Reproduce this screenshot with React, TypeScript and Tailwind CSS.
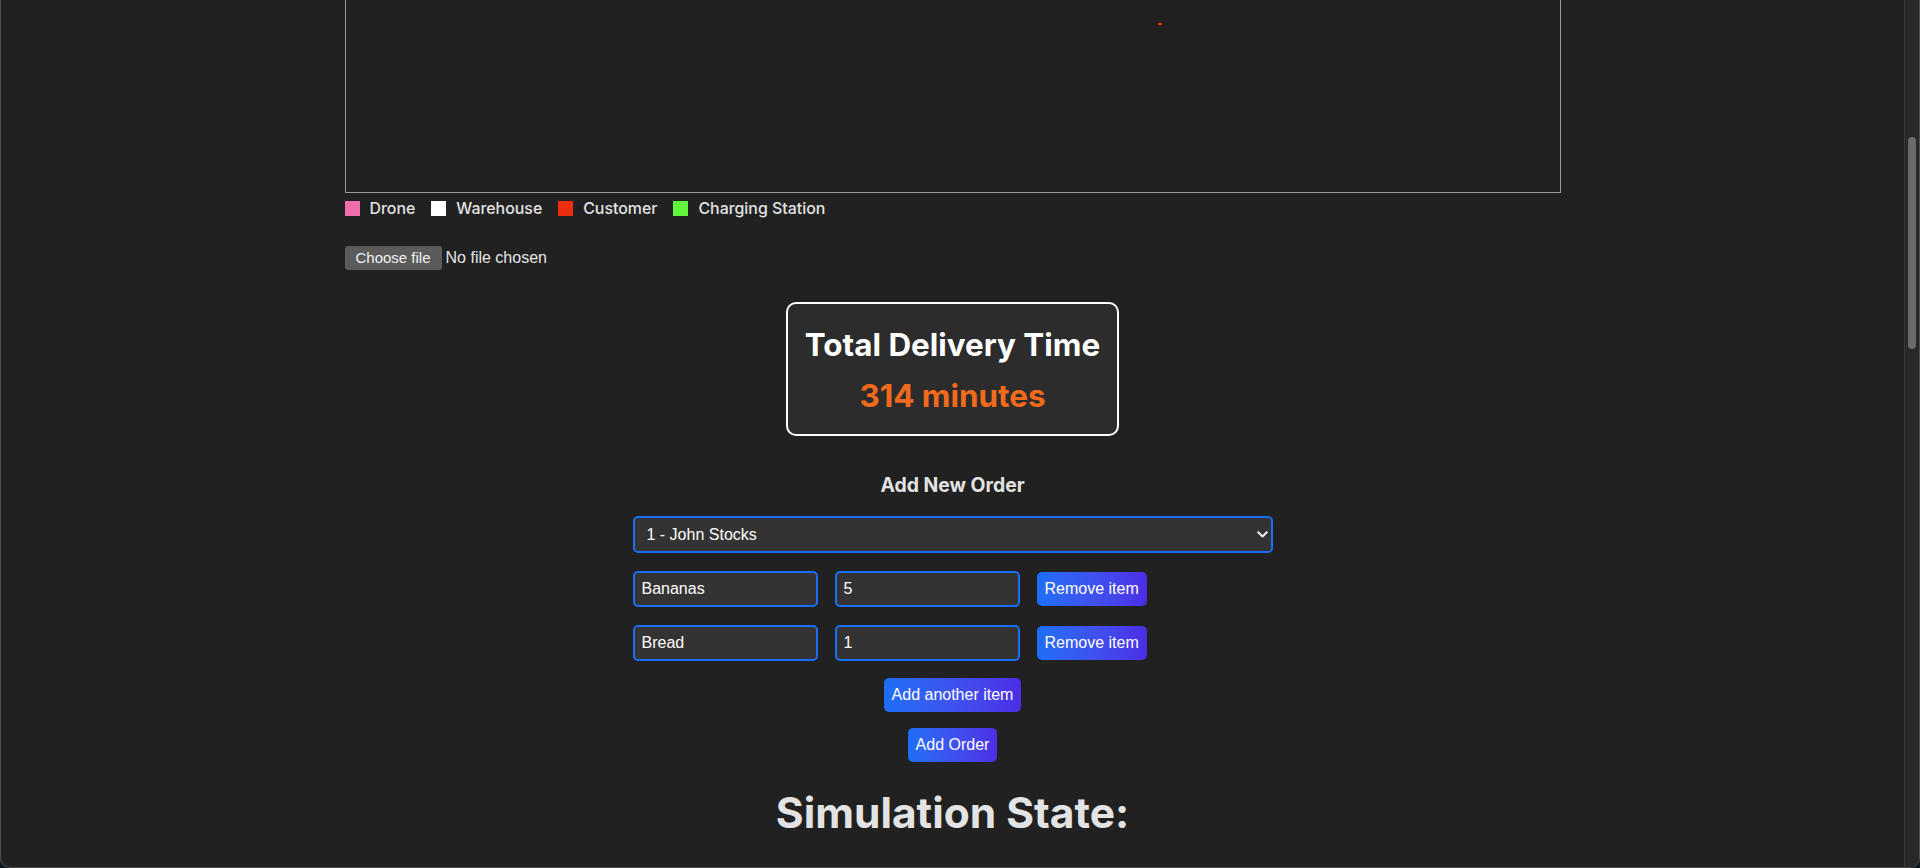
import React from "react";

function LegendItem({ color, label }: { color: string; label: string }) {
  return (
    <div className="mr-4 flex items-center">
      <span className={`mr-[10px] block h-[15px] w-[15px] ${color}`} />
      <span>{label}</span>
    </div>
  );
}

function ItemRow({ name, qty }: { name: string; qty: string }) {
  return (
    <div className="mt-[18px] flex items-center gap-[17px]">
      <input
        readOnly
        value={name}
        className="h-[36px] w-[185px] rounded-[5px] border-2 border-[#1a6ff5] bg-[#333333] pl-[7px] font-['Liberation_Sans',Arial,sans-serif] text-[16px] text-white outline-none"
      />
      <input
        readOnly
        value={qty}
        className="h-[36px] w-[185px] rounded-[5px] border-2 border-[#1a6ff5] bg-[#333333] pl-[7px] font-['Liberation_Sans',Arial,sans-serif] text-[16px] text-white outline-none"
      />
      <button className="h-[34px] rounded-[5px] bg-linear-to-r from-[#1b6ff7] to-[#4c2de6] px-2 font-['Liberation_Sans',Arial,sans-serif] text-[16px] text-white">
        Remove item
      </button>
    </div>
  );
}

export default function App() {
  return (
    <div className="h-[868px] w-[1920px] overflow-hidden bg-[#0e1820]">
      <div className="flex h-full overflow-hidden rounded-b-[10px] border-x border-b border-[#4f4f4f] bg-[#212121]">
        <main className="min-w-0 flex-1">
          <div className="mx-auto max-w-[1280px] px-8 font-['Inter',sans-serif]">
            {/* canvas */}
            <div className="relative h-[193px] border-x border-b border-[#9a9a9a]">
              <div className="absolute left-[812px] top-[23px] h-[2px] w-[4px] bg-[#eb2f10]" />
            </div>

            {/* legend */}
            <div className="mt-[4px] flex h-6 items-center text-[15.9px] font-medium text-[#e3e3e3]">
              <LegendItem color="bg-[#ef6dab]" label="Drone" />
              <LegendItem color="bg-white" label="Warehouse" />
              <LegendItem color="bg-[#ec2e0e]" label="Customer" />
              <LegendItem color="bg-[#60f43d]" label="Charging Station" />
            </div>

            {/* file input */}
            <div className="mt-[25px] flex h-6 items-center font-['Liberation_Sans',Arial,sans-serif] text-[16px]">
              <span className="flex h-6 items-center rounded-[3px] bg-[#5b5b5b] px-[11px] text-[15px] text-[#f2f2f2]">
                Choose file
              </span>
              <span className="ml-1 text-[#e6e6e6]">No file chosen</span>
            </div>

            {/* total */}
            <div className="mt-8 flex justify-center">
              <div className="rounded-[10px] border-2 border-white bg-[#2c2c2c] px-[17px] pb-[20px] pt-[22px] text-center">
                <div className="text-[31.4px] font-bold leading-[38px] text-white">Total Delivery Time</div>
                <div className="mt-[14px] text-[31.4px] font-bold leading-[36px] text-[#f26b1d]">314 minutes</div>
              </div>
            </div>

            {/* add order */}
            <h3 className="mt-[35px] text-center text-[19.4px] font-bold leading-[28px] text-[#e3e3e3]">
              Add New Order
            </h3>
            <div className="mx-auto mt-[17px] flex w-[640px] flex-col">
              <div className="relative h-[37px] w-full">
                <select className="h-[37px] w-full appearance-none rounded-[5px] border-2 border-[#1a6ff5] bg-[#333333] pl-[12px] font-['Liberation_Sans',Arial,sans-serif] text-[16px] text-white outline-none">
                  <option>1 - John Stocks</option>
                </select>
                <svg
                  className="pointer-events-none absolute right-[5px] top-[15px]"
                  width="11"
                  height="7"
                  viewBox="0 0 11 7"
                  fill="none"
                >
                  <path d="M1.2 1.2 L5.5 5.5 L9.8 1.2" stroke="#f2f2f2" strokeWidth="2" strokeLinecap="round" strokeLinejoin="round" />
                </svg>
              </div>
              <ItemRow name="Bananas" qty="5" />
              <ItemRow name="Bread" qty="1" />
            </div>
            <div className="mt-[17px] flex justify-center">
              <button className="h-[34px] rounded-[5px] bg-linear-to-r from-[#1b6ff7] to-[#4c2de6] px-2 font-['Liberation_Sans',Arial,sans-serif] text-[16px] text-white">
                Add another item
              </button>
            </div>
            <div className="mt-4 flex justify-center">
              <button className="h-[34px] rounded-[5px] bg-linear-to-r from-[#1b6ff7] to-[#4c2de6] px-2 font-['Liberation_Sans',Arial,sans-serif] text-[16px] text-white">
                Add Order
              </button>
            </div>

            <h2 className="mt-[29px] text-center text-[42.5px] font-bold leading-[44px] text-[#e3e3e3]">
              Simulation State:
            </h2>
          </div>
        </main>

        {/* scrollbar */}
        <div className="w-[15px] shrink-0 border-l border-[#3a3a3a] bg-[#282828]">
          <div className="mx-auto mt-[137px] h-[212px] w-[8px] rounded-full bg-[#6a6a6a]" />
        </div>
      </div>
    </div>
  );
}
